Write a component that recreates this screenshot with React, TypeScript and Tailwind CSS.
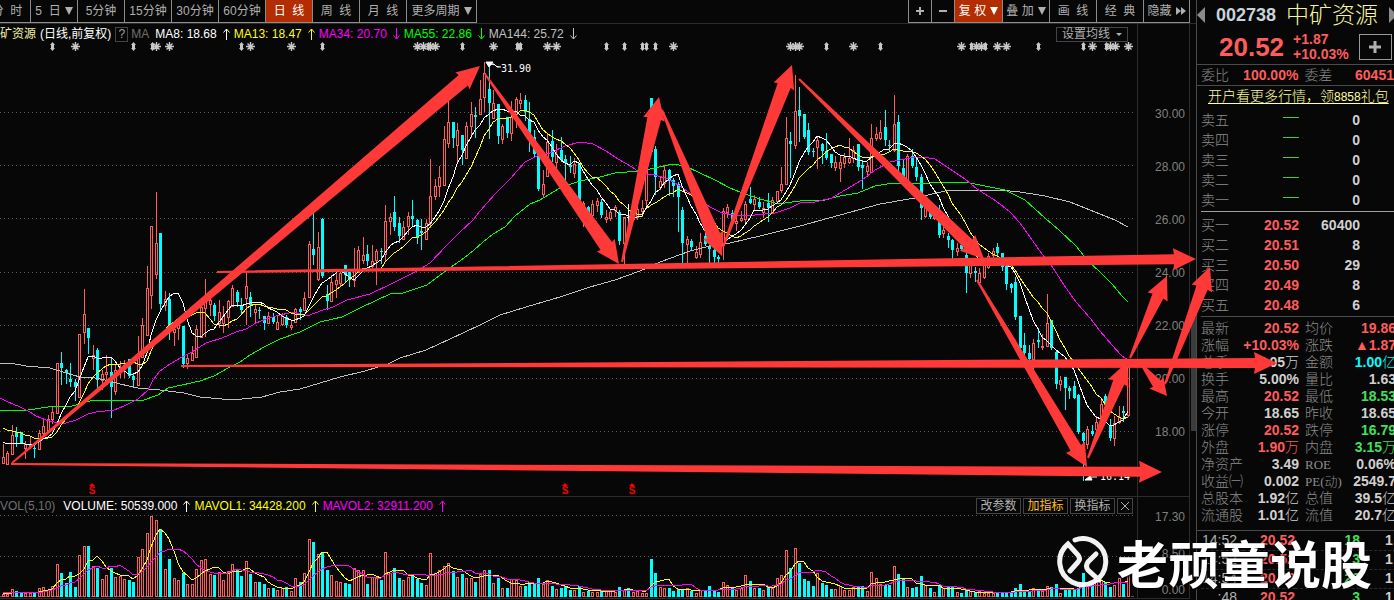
import type { ReactNode } from 'react';

const SANS = "font-['Liberation_Sans','Noto_Sans_CJK_SC',sans-serif]";

const RED = '#ff5c5c';
const CYAN = '#00ffff';

// [kind, high, body top, body bottom, low] on the price pane's vertical scale
type Candle = [string, number, number, number, number];

const CANDLES: Candle[] = [
  ['u', 444, 457, 463, 463], ['u', 451, 453, 464, 464], ['u', 425, 435, 454, 454], ['d', 427, 432, 437, 446],
  ['d', 432, 432, 443, 443], ['u', 441, 444, 448, 458], ['u', 437, 445, 446, 448], ['d', 445, 448, 449, 457],
  ['u', 430, 433, 449, 449], ['u', 419, 426, 433, 436], ['u', 415, 419, 431, 431], ['u', 406, 412, 419, 423],
  ['u', 363, 363, 413, 413], ['d', 352, 363, 368, 384], ['d', 369, 370, 373, 383], ['d', 363, 379, 382, 386],
  ['d', 379, 382, 387, 400], ['u', 334, 334, 397, 397], ['u', 289, 314, 332, 343], ['d', 328, 328, 338, 353],
  ['u', 345, 355, 358, 369], ['d', 348, 350, 380, 387], ['u', 370, 374, 380, 389], ['u', 355, 372, 374, 384],
  ['d', 357, 372, 387, 417], ['u', 365, 370, 391, 394], ['u', 361, 367, 370, 377], ['u', 360, 365, 366, 377],
  ['d', 359, 359, 376, 377], ['d', 373, 376, 380, 385], ['u', 336, 355, 385, 385], ['u', 318, 325, 357, 357],
  ['u', 266, 288, 335, 335], ['u', 226, 226, 295, 308], ['u', 192, 243, 274, 278], ['d', 233, 233, 304, 309],
  ['u', 291, 299, 305, 310], ['d', 293, 299, 332, 339], ['u', 323, 329, 332, 345], ['u', 323, 324, 328, 339],
  ['d', 326, 326, 364, 367], ['u', 355, 358, 363, 368], ['u', 346, 353, 360, 360], ['u', 325, 329, 357, 357],
  ['u', 305, 307, 337, 337], ['u', 279, 302, 308, 336], ['u', 298, 300, 304, 315], ['d', 303, 305, 316, 320],
  ['u', 300, 312, 323, 327], ['u', 306, 316, 323, 332], ['u', 300, 301, 317, 327], ['u', 285, 288, 306, 306],
  ['d', 290, 292, 302, 306], ['d', 298, 305, 310, 314], ['u', 272, 286, 298, 324], ['d', 292, 297, 305, 316],
  ['u', 305, 309, 312, 322], ['d', 307, 310, 311, 318], ['d', 316, 316, 323, 329], ['u', 312, 316, 323, 323],
  ['d', 313, 317, 322, 323], ['u', 315, 322, 329, 329], ['u', 313, 316, 324, 325], ['d', 315, 317, 325, 327],
  ['u', 320, 325, 327, 329], ['u', 308, 309, 322, 322], ['d', 307, 309, 312, 319], ['u', 292, 298, 310, 310],
  ['u', 241, 244, 297, 297], ['d', 212, 249, 255, 264], ['u', 232, 247, 279, 280], ['d', 218, 219, 276, 277],
  ['d', 285, 294, 301, 309], ['u', 275, 282, 301, 301], ['u', 272, 280, 284, 297], ['u', 272, 273, 283, 285],
  ['d', 265, 265, 275, 281], ['d', 272, 272, 280, 286], ['u', 248, 270, 280, 286], ['u', 246, 250, 272, 272],
  ['u', 237, 255, 260, 263], ['d', 245, 254, 261, 265], ['u', 245, 261, 266, 267], ['u', 249, 251, 260, 284],
  ['d', 248, 251, 252, 263], ['u', 205, 221, 254, 260], ['u', 213, 217, 221, 234], ['d', 196, 212, 227, 230],
  ['d', 217, 223, 236, 242], ['u', 221, 227, 239, 239], ['u', 212, 216, 226, 234], ['d', 200, 216, 219, 226],
  ['d', 219, 220, 238, 243], ['d', 219, 231, 233, 249], ['u', 219, 223, 239, 239], ['u', 159, 196, 223, 227],
  ['u', 179, 186, 196, 199], ['u', 166, 177, 186, 196], ['u', 126, 139, 185, 185], ['u', 101, 122, 143, 147],
  ['d', 122, 122, 138, 147], ['u', 123, 130, 145, 161], ['d', 135, 135, 150, 164], ['u', 122, 126, 158, 158],
  ['u', 102, 114, 126, 137], ['d', 107, 115, 117, 137], ['u', 80, 99, 114, 114], ['u', 62, 73, 97, 111],
  ['d', 65, 89, 103, 138], ['u', 90, 103, 118, 118], ['d', 104, 104, 136, 143], ['u', 124, 126, 139, 143],
  ['d', 117, 117, 133, 137], ['u', 101, 117, 133, 140], ['u', 97, 99, 114, 127], ['u', 93, 100, 103, 108],
  ['d', 95, 100, 112, 120], ['d', 102, 119, 137, 151], ['d', 130, 137, 154, 156], ['d', 153, 153, 189, 190],
  ['u', 170, 184, 194, 196], ['u', 133, 142, 176, 176], ['d', 130, 141, 157, 161], ['u', 144, 154, 162, 168],
  ['d', 137, 150, 160, 161], ['d', 155, 159, 163, 183], ['d', 156, 165, 167, 172], ['u', 158, 164, 173, 177],
  ['d', 163, 163, 200, 200], ['u', 201, 203, 215, 226], ['d', 206, 207, 218, 223], ['u', 200, 204, 215, 219],
  ['u', 198, 201, 205, 211], ['d', 199, 202, 215, 217], ['u', 210, 217, 219, 222], ['u', 210, 212, 218, 220],
  ['u', 205, 207, 210, 216], ['d', 210, 212, 241, 244], ['u', 217, 217, 243, 263], ['w', 204, 217, 218, 225],
  ['u', 210, 215, 219, 220], ['u', 205, 209, 217, 219], ['u', 200, 208, 211, 216], ['u', 137, 150, 200, 208],
  ['d', 98, 98, 152, 152], ['d', 146, 149, 177, 194], ['u', 177, 181, 187, 189], ['u', 166, 170, 183, 187],
  ['d', 169, 170, 181, 195], ['d', 178, 180, 186, 196], ['d', 182, 184, 197, 231], ['d', 207, 210, 243, 263],
  ['u', 236, 239, 244, 262], ['d', 239, 241, 247, 250], ['u', 246, 252, 257, 258], ['u', 233, 242, 254, 257],
  ['d', 233, 236, 244, 245], ['d', 245, 246, 249, 263], ['d', 246, 250, 257, 262], ['d', 255, 257, 259, 262],
  ['u', 208, 211, 245, 259], ['u', 204, 207, 212, 217], ['d', 210, 213, 220, 223], ['u', 215, 221, 223, 230],
  ['u', 211, 218, 220, 221], ['u', 201, 204, 219, 222], ['d', 187, 199, 203, 203], ['u', 195, 199, 204, 209],
  ['d', 197, 202, 207, 208], ['u', 202, 208, 212, 217], ['d', 193, 203, 208, 221], ['u', 197, 200, 212, 213],
  ['u', 191, 191, 201, 203], ['u', 167, 184, 190, 192], ['u', 117, 138, 184, 184], ['d', 132, 141, 144, 177],
  ['u', 75, 111, 145, 148], ['d', 87, 110, 116, 141], ['d', 114, 114, 137, 138], ['d', 123, 130, 152, 154],
  ['d', 148, 151, 152, 156], ['u', 137, 140, 147, 168], ['d', 143, 144, 151, 163], ['d', 133, 151, 158, 159],
  ['d', 154, 154, 163, 167], ['u', 156, 162, 167, 170], ['u', 156, 162, 168, 181], ['u', 153, 157, 163, 167],
  ['u', 138, 158, 162, 163], ['u', 146, 150, 158, 162], ['d', 144, 144, 167, 170], ['d', 160, 165, 168, 188],
  ['u', 162, 166, 171, 176], ['u', 124, 138, 172, 172], ['u', 127, 134, 138, 140], ['u', 120, 132, 138, 139],
  ['d', 110, 127, 140, 145], ['d', 140, 145, 146, 150], ['u', 95, 124, 150, 151], ['d', 115, 122, 166, 178],
  ['d', 160, 168, 177, 180], ['u', 154, 156, 182, 182], ['d', 149, 156, 166, 167], ['d', 159, 167, 177, 180],
  ['d', 174, 177, 208, 219], ['u', 200, 207, 216, 217], ['d', 201, 210, 217, 218], ['u', 208, 213, 218, 219],
  ['d', 205, 210, 235, 237], ['u', 225, 230, 233, 237], ['d', 233, 236, 240, 247], ['d', 239, 240, 250, 258],
  ['u', 243, 248, 251, 255], ['d', 240, 245, 249, 250], ['d', 253, 255, 273, 292], ['u', 262, 265, 273, 277],
  ['d', 267, 271, 273, 281], ['u', 268, 273, 282, 284], ['u', 258, 264, 277, 278], ['u', 253, 256, 267, 268],
  ['u', 248, 251, 255, 257], ['d', 243, 247, 253, 255], ['d', 253, 253, 267, 270], ['d', 265, 266, 284, 289],
  ['d', 283, 284, 288, 292], ['d', 277, 282, 317, 319], ['d', 316, 316, 348, 349], ['d', 333, 345, 353, 357],
  ['d', 345, 353, 359, 360], ['u', 339, 343, 359, 371], ['d', 328, 340, 342, 347], ['u', 334, 346, 347, 349],
  ['u', 294, 323, 346, 346], ['d', 320, 320, 348, 349], ['d', 350, 352, 384, 388], ['u', 376, 380, 384, 390],
  ['d', 377, 377, 388, 409], ['d', 386, 388, 391, 398], ['d', 381, 386, 398, 398], ['d', 394, 395, 432, 433],
  ['d', 432, 433, 441, 480], ['u', 426, 429, 444, 448], ['d', 425, 431, 434, 435], ['u', 416, 422, 429, 433],
  ['u', 400, 404, 420, 422], ['d', 394, 396, 405, 420], ['d', 419, 426, 438, 440], ['u', 416, 423, 438, 445],
  ['u', 406, 417, 422, 423], ['d', 406, 411, 413, 421], ['u', 366, 367, 415, 416],
];

const VOLUMES = [
  9, 9, 23, 19, 12, 12, 12, 12, 26, 29, 20, 34, 100, 71, 41, 74, 29, 127, 154, 152, 94, 86, 55, 67, 86, 61, 64, 55,
  50, 44, 121, 145, 193, 244, 230, 203, 85, 113, 58, 52, 71, 40, 40, 85, 112, 115, 68, 65, 76, 50, 79, 100, 81, 64,
  109, 68, 44, 44, 38, 26, 26, 20, 28, 29, 19, 58, 44, 73, 175, 164, 130, 131, 80, 67, 49, 46, 43, 38, 88, 80, 80,
  38, 61, 61, 50, 136, 71, 86, 56, 52, 61, 68, 53, 43, 37, 133, 73, 82, 94, 103, 79, 59, 68, 58, 58, 44, 70, 82, 80,
  43, 56, 28, 26, 53, 51, 32, 32, 44, 41, 56, 40, 52, 32, 25, 26, 34, 20, 22, 34, 16, 17, 16, 16, 22, 20, 22, 16, 29,
  20, 28, 14, 17, 13, 13, 115, 71, 29, 28, 26, 17, 25, 24, 28, 17, 11, 20, 20, 32, 20, 14, 46, 37, 26, 22, 28, 67, 49,
  28, 26, 22, 32, 28, 58, 67, 142, 86, 148, 101, 53, 47, 34, 71, 41, 35, 23, 25, 34, 22, 22, 31, 32, 32, 19, 76, 58,
  40, 35, 35, 94, 68, 53, 31, 26, 29, 62, 37, 26, 16, 35, 28, 29, 29, 16, 11, 20, 17, 15, 17, 13, 12, 12, 16, 14, 14,
  14, 26, 38, 17, 16, 26, 20, 19, 34, 29, 38, 13, 28, 25, 20, 28, 71, 46, 40, 47, 50, 46, 29, 37, 58, 40, 71,
];

const MA34 =
  '0,398 8,402 20,407 30,412 36,416 46,420 58,423 66,423 76,420 88,414 96,412 114,410 124,406 138,399 148,390 153,380 160,371 170,364 182,357 192,352 206,343 222,338 236,332 246,329 256,323 266,319 276,316 293,312 307,316 323,310 333,307 347,300 370,294 393,283 417,271 430,263 447,245 460,232 473,220 480,211 495,194 510,179 525,162 537,156 550,153 565,146 580,142 593,144 606,151 618,159 632,167 642,174 655,175 668,179 680,186 695,197 710,207 722,213 735,215 755,215 775,213 790,208 800,203 815,202 832,198 845,190 862,180 875,170 890,162 900,160 910,158 922,157 935,159 950,169 965,179 977,189 996,201 1010,212 1020,223 1030,237 1042,254 1051,265 1064,285 1076,302 1090,318 1100,331 1112,345 1122,356 1128,360';
const MA55 =
  '0,410 28,410 48,407 72,406 90,401 110,400 144,400 158,395 168,388 182,385 200,381 214,376 228,368 240,362 250,355 264,347 280,339 300,332 320,322 342,317 360,308 390,294 403,293 427,285 447,270 464,258 474,250 483,242 493,234 505,227 515,216 530,204 540,200 560,188 580,181 600,177 615,173 640,171 655,168 672,164 685,166 700,173 715,180 730,188 745,194 760,199 775,203 785,203 800,201 825,200 840,196 858,193 875,186 893,183 920,184 940,182 965,182 980,185 1005,190 1025,200 1045,218 1060,231 1076,246 1088,261 1100,272 1112,284 1122,296 1128,302';
const MA144 =
  '0,363 10,363 26,366 50,368 66,373 80,377 95,378 110,381 120,384 138,388 160,390 184,393 200,397 222,399 242,399 262,397 280,392 300,389 340,377 365,371 388,364 400,358 426,350 450,339 480,325 500,315 526,307 560,297 590,287 615,280 640,271 660,262 690,251 710,246 730,243 760,236 800,226 840,215 880,204 915,198 945,191 970,190 1000,190 1020,192 1045,196 1070,202 1095,212 1115,220 1128,227';

const STARS = [75, 156, 169, 250, 291, 417, 423, 430, 435, 493, 547, 556, 673, 790, 795, 799, 853, 961, 976, 981, 997, 1006, 1092, 1110, 1115, 1128];
const DIAMONDS = [52, 133, 152, 241, 322, 428, 462, 517, 520, 606, 624, 642, 646, 655, 826, 880, 971, 985, 1038, 1083, 1106];

const candleX = (i: number) => Math.floor(3 + i * 4.5);

function average(values: number[], period: number, seed: number) {
  return values.map((_, i) => {
    let sum = 0;
    for (let k = i - period + 1; k <= i; k++) sum += k < 0 ? seed : values[k];
    return sum / period;
  });
}

const toPoints = (values: number[], y: (v: number) => number) =>
  values.map((v, i) => `${candleX(i)},${Math.round(y(v))}`).join(' ');

const CLOSES = CANDLES.map(([kind, , top, bottom]) => (kind === 'u' ? top : bottom));

function Line({ points, color }: { points: string; color: string }) {
  return <polyline points={points} fill="none" stroke={color} strokeWidth="1" />;
}

function Grid({ rows }: { rows: number[] }) {
  return (
    <>
      {rows.map((y) => (
        <line key={y} x1="0" x2="1134" y1={y + 0.5} y2={y + 0.5} stroke="#5a5a5a" strokeDasharray="1 3" />
      ))}
    </>
  );
}

function PriceChart() {
  return (
    <svg viewBox="0 44 1137 452" className="block w-full overflow-visible" role="img" aria-label="日线">
      <g shapeRendering="crispEdges">
        <Grid rows={[112, 165, 218, 272, 325, 378, 431]} />
        {CANDLES.map(([kind, high, top, bottom, low], i) => {
          const x = candleX(i);
          if (kind === 'u') {
            return (
              <g key={i} stroke={RED} fill="none">
                <line x1={x + 0.5} x2={x + 0.5} y1={high} y2={top} />
                <line x1={x + 0.5} x2={x + 0.5} y1={bottom} y2={low + 1} />
                <rect x={x - 0.5} y={top + 0.5} width="2" height={bottom - top} />
              </g>
            );
          }
          const fill = kind === 'w' ? '#ffffff' : CYAN;
          return (
            <g key={i} fill={fill}>
              <rect x={x} y={high} width="1" height={low - high + 1} />
              <rect x={x - 1} y={top} width="3" height={bottom - top} />
            </g>
          );
        })}
        <Line points={MA144} color="#c0c0c0" />
        <Line points={MA55} color="#00ff00" />
        <Line points={MA34} color="#ff00ff" />
        <Line points={toPoints(average(CLOSES, 13, 426), (v) => v)} color="#ffff00" />
        <Line points={toPoints(average(CLOSES, 8, 440), (v) => v)} color="#ffffff" />
      </g>
      <g stroke="#c8c8c8">
        {STARS.map((x) => (
          <path key={x} d={`M${x + 0.5} 42v9M${x - 4} 46.5h9M${x - 2.5} 43.5l6 6M${x + 3.5} 43.5l-6 6`} strokeWidth="1.4" />
        ))}
      </g>
      <g fill="#c8c8c8">
        {DIAMONDS.map((x) => (
          <path key={x} d={`M${x + 0.5} 42l2.5 3h-1v3h1l-2.5 3l-2.5 -3h1v-3h-1z`} />
        ))}
      </g>
      <g className="font-['DejaVu_Sans_Mono',monospace] text-[10px]" fill="#ffffff">
        <path d="M486 62h7l-4 5zM490 64l4 0l3 3h4" stroke="#ffffff" strokeWidth="1" />
        <text x="501" y="72">31.90</text>
        <path d="M1085 480l5 -4l2 4zM1091 477h6" stroke="#ffffff" strokeWidth="1" />
        <text x="1100" y="480">16.14</text>
      </g>
      <g fill="#ff0000" className="font-['Liberation_Sans',sans-serif] text-[10px] font-bold" textAnchor="middle">
        {[92, 565, 632].map((x) => (
          <g key={x}>
            <path d={`M${x - 3} 486h6l-3 -3z`} />
            <text x={x} y="494">S</text>
          </g>
        ))}
      </g>
    </svg>
  );
}

function VolumeChart() {
  const y = (v: number) => 597 - v / 3;
  return (
    <svg viewBox="0 515 1137 83" className="block w-full" role="img" aria-label="VOL">
      <g shapeRendering="crispEdges">
        <Grid rows={[515, 556]} />
        <line x1="0" x2="1134" y1="596.5" y2="596.5" stroke="#5a5a5a" strokeDasharray="8 5" />
        {VOLUMES.map((v, i) => {
          const x = candleX(i);
          const top = Math.round(y(v));
          return CANDLES[i][0] === 'u' ? (
            <rect key={i} x={x - 0.5} y={top + 0.5} width="2" height={596 - top} fill="none" stroke={RED} />
          ) : (
            <rect key={i} x={x - 1} y={top} width="3" height={597 - top} fill={CYAN} />
          );
        })}
        <Line points={toPoints(average(VOLUMES, 5, 13), y)} color="#ffff00" />
        <Line points={toPoints(average(VOLUMES, 10, 15), y)} color="#ff00ff" />
      </g>
    </svg>
  );
}

// [tail x, tail y, tip x, tip y, neck half width]
const ARROWS = [
  [12, 463, 480, 66, 7],
  [485, 74, 619, 264, 7],
  [622, 262, 659, 97, 7],
  [662, 110, 722, 256, 7],
  [723, 247, 792, 65, 7],
  [799, 79, 984, 259, 6],
  [217, 272, 1196, 259, 5],
  [181, 366, 1277, 363, 5],
  [11, 464, 1162, 472, 5],
  [977, 280, 1087, 467, 6],
  [1088, 458, 1127, 362, 6],
  [1130, 358, 1167, 276, 6],
  [1141, 364, 1167, 396, 5],
  [1165, 384, 1210, 267, 6],
];

function arrowPoints([x1, y1, x2, y2, neck]: number[]) {
  const len = Math.hypot(x2 - x1, y2 - y1);
  const ux = (x2 - x1) / len;
  const uy = (y2 - y1) / len;
  const head = len < 50 ? 17 : 23;
  const wing = len < 50 ? 9 : 11;
  const at = (back: number, side: number) =>
    `${(x2 - ux * back - uy * side).toFixed(1)},${(y2 - uy * back + ux * side).toFixed(1)}`;
  return [at(len, 1), at(head - 1, neck), at(head, wing), at(0, 0), at(head, -wing), at(head - 1, -neck), at(len, -1)].join(' ');
}

function TrendArrows() {
  return (
    <svg viewBox="0 0 1394 600" className="pointer-events-none absolute inset-0 h-full w-full" aria-hidden="true">
      {ARROWS.map((a) => (
        <polygon key={a.join()} points={arrowPoints(a)} fill="#ff3838" />
      ))}
    </svg>
  );
}

function Watermark() {
  return (
    <div className="pointer-events-none absolute right-[22px] bottom-2 flex items-center gap-2 text-white">
      <svg viewBox="0 0 52 52" className="h-[52px] w-[52px] opacity-95" fill="none" stroke="#ffffff" strokeWidth="5" strokeLinecap="round" aria-hidden="true">
        <path d="M18 4A23 23 0 1 1 11 8L21 19Q24 23 21 26L13 35" />
        <path d="M39 18L31 26Q28 30 31 34L42 44" />
      </svg>
      <span className="font-['Noto_Sans_CJK_SC',sans-serif] text-[51px] leading-[60px] font-bold [text-shadow:1px_1px_2px_#000]">
        老顽童说股
      </span>
    </div>
  );
}

function ToolButton({ children, width, active }: { children: ReactNode; width: string; active?: boolean }) {
  return (
    <button
      type="button"
      className={`flex h-[23px] shrink-0 items-center justify-center gap-1 border-r border-b border-[#8c8c8c] whitespace-nowrap ${width} ${
        active ? 'bg-[#b42d00] text-white' : 'text-[#b0b0b0]'
      }`}
    >
      {children}
    </button>
  );
}

function Toolbar() {
  return (
    <div className="flex h-6 justify-between border-b border-[#2c2c2c] pr-[6px] text-xs">
      <div className="flex overflow-hidden">
        <ToolButton width="w-[31px]"><span className="-ml-4">分&nbsp; 时</span></ToolButton>
        <ToolButton width="w-[47px]">5 &nbsp;日<Caret /></ToolButton>
        <ToolButton width="w-[47px]">5分钟</ToolButton>
        <ToolButton width="w-[47px]">15分钟</ToolButton>
        <ToolButton width="w-[47px]">30分钟</ToolButton>
        <ToolButton width="w-[47px]">60分钟</ToolButton>
        <ToolButton width="w-[47px]" active>日&nbsp; 线</ToolButton>
        <ToolButton width="w-[47px]">周&nbsp; 线</ToolButton>
        <ToolButton width="w-[47px]">月&nbsp; 线</ToolButton>
        <ToolButton width="w-[70px]">更多周期<Caret /></ToolButton>
      </div>
      <div className="flex border-l border-[#8c8c8c]">
        <ToolButton width="w-[23px]"><Plus /></ToolButton>
        <ToolButton width="w-[23px]">
          <svg viewBox="0 0 8 8" className="h-2 w-2" fill="currentColor" aria-label="缩小"><path d="M0 3h8v2H0z" /></svg>
        </ToolButton>
        <ToolButton width="w-[48px]" active>复 权<Caret /></ToolButton>
        <ToolButton width="w-[47px]">叠 加<Caret /></ToolButton>
        <ToolButton width="w-[47px]">画&nbsp; 线</ToolButton>
        <ToolButton width="w-[47px]">经&nbsp; 典</ToolButton>
        <ToolButton width="w-[46px]">
          隐藏
          <svg viewBox="0 0 10 8" className="h-2 w-[10px]" fill="currentColor" aria-hidden="true"><path d="M0 0l5 4l-5 4zM5 0l5 4l-5 4z" /></svg>
        </ToolButton>
      </div>
    </div>
  );
}

function Caret() {
  return (
    <svg viewBox="0 0 8 8" className="h-2 w-2 shrink-0" fill="currentColor" aria-hidden="true">
      <path d="M0 0h8l-4 8z" />
    </svg>
  );
}

function Plus() {
  return (
    <svg viewBox="0 0 8 8" className="h-2 w-2" fill="currentColor" aria-label="放大">
      <path d="M3 0h2v3h3v2H5v3H3V5H0V3h3z" />
    </svg>
  );
}

function Reading({ label, color, down }: { label: string; color: string; down?: boolean }) {
  return (
    <span className={`flex items-center gap-[6px] ${color}`}>
      {label}
      <svg viewBox="0 0 7 12" className={`h-3 w-[7px] ${down ? 'rotate-180' : ''}`} fill="none" stroke="currentColor" aria-hidden="true">
        <path d="M3.5 12V1M0.500 4.500L3.500 1L6.500 4.500" />
      </svg>
    </span>
  );
}

function PriceHeader() {
  return (
    <div className="flex h-5 items-center text-xs whitespace-nowrap">
      <span className="text-[#f0f0a8]">矿资源</span>
      <span className="ml-1 text-white">(日线,前复权)</span>
      <button type="button" className="ml-1 h-[15px] w-[13px] border border-[#444] leading-3 text-[#a0a0a0]">?</button>
      <span className="ml-[3px] text-[#707070]">MA</span>
      <div className="ml-[6px] flex gap-1">
        <Reading label="MA8: 18.68" color="text-white" />
        <Reading label="MA13: 18.47" color="text-[#ffff00]" />
        <Reading label="MA34: 20.70" color="text-[#ff00ff]" down />
        <Reading label="MA55: 22.86" color="text-[#00ff00]" down />
        <Reading label="MA144: 25.72" color="text-[#c0c0c0]" down />
      </div>
      <button type="button" className="mr-[9px] ml-auto flex h-[15px] w-[72px] items-center justify-center gap-[6px] border border-[#444] text-[#b0b0b0]">
        设置均线
        <svg viewBox="0 0 6 3" className="h-[3px] w-[6px]" fill="currentColor" aria-hidden="true"><path d="M0 0h6l-3 3z" /></svg>
      </button>
    </div>
  );
}

function VolumeHeader() {
  const box = 'h-4 border border-[#444] leading-[14px]';
  return (
    <div className="flex h-[18px] items-center text-xs whitespace-nowrap">
      <span className="text-[#707070]">VOL(5,10)</span>
      <div className="ml-2 flex gap-1">
        <Reading label="VOLUME: 50539.000" color="text-white" />
        <Reading label="MAVOL1: 34428.200" color="text-[#ffff00]" />
        <Reading label="MAVOL2: 32911.200" color="text-[#ff00ff]" />
      </div>
      <div className="mr-1 ml-auto flex gap-[2px] text-[#b0b0b0]">
        <button type="button" className={`w-[45px] ${box}`}>改参数</button>
        <button type="button" className={`w-[45px] text-[#ffc020] ${box}`}>加指标</button>
        <button type="button" className={`w-[45px] ${box}`}>换指标</button>
        <button type="button" aria-label="关闭" className={`flex w-4 items-center justify-center ${box}`}>
          <svg viewBox="0 0 10 10" className="h-[10px] w-[10px]" stroke="currentColor" aria-hidden="true"><path d="M1 1l8 8M9 1l-8 8" /></svg>
        </button>
      </div>
    </div>
  );
}

const TONES: Record<string, string> = {
  red: 'text-[#ff5c5c]',
  green: 'text-[#40e060]',
  cyan: 'text-[#00ffff]',
  white: 'text-[#d0d0d0]',
};

const ASKS = ['卖五', '卖四', '卖三', '卖二', '卖一'];
const BIDS = [
  ['买一', '20.52', '60400'],
  ['买二', '20.51', '8'],
  ['买三', '20.50', '29'],
  ['买四', '20.49', '8'],
  ['买五', '20.48', '6'],
];

const STATS = [
  ['最新', '20.52', 'red', '均价', '19.86', 'red'],
  ['涨幅', '+10.03%', 'red', '涨跌', '▲1.87', 'red'],
  ['总手', '5.05万', 'white', '金额', '1.00亿', 'cyan'],
  ['换手', '5.00%', 'white', '量比', '1.63', 'white'],
  ['最高', '20.52', 'red', '最低', '18.53', 'green'],
  ['今开', '18.65', 'white', '昨收', '18.65', 'white'],
  ['涨停', '20.52', 'red', '跌停', '16.79', 'green'],
  ['外盘', '1.90万', 'red', '内盘', '3.15万', 'green'],
  ['净资产', '3.49', 'white', 'ROE', '0.06%', 'white'],
  ['收益㈠', '0.002', 'white', 'PE(动)', '2549.7', 'white'],
  ['总股本', '1.92亿', 'white', '总值', '39.5亿', 'white'],
  ['流通股', '1.01亿', 'white', '流值', '20.7亿', 'white'],
];

const TRADES = [
  ['14:52', '20.52', '18'],
  ['14:52', '20.52', '3'],
  ['14:54', '20.52', '23'],
  [':48', '20.52', '3'],
];

function StatRow({ row }: { row: string[] }) {
  const [label, value, tone, label2, value2, tone2] = row;
  return (
    <tr className="h-[17px]">
      <th scope="row" className="w-[42px] p-0 text-left font-light text-[#8c8c8c]">{label}</th>
      <td className={`w-[56px] p-0 text-right font-bold ${TONES[tone]}`}>
        <Value text={value} />
      </td>
      <th scope="row" className="w-[48px] p-0 pl-[6px] text-left font-light text-[#8c8c8c]">
        {/[A-Z]/.test(label2) ? <span className="font-['Liberation_Serif','Noto_Sans_CJK_SC',serif] text-[13px]">{label2}</span> : label2}
      </th>
      <td className={`w-[49px] p-0 text-right font-bold ${TONES[tone2]}`}>
        <Value text={value2} />
      </td>
    </tr>
  );
}

// figures are bold, the unit behind them is light
function Value({ text }: { text: string }) {
  const unit = /[万亿]$/.test(text) ? text.slice(-1) : '';
  return (
    <span className="flex justify-end">
      {unit ? text.slice(0, -1) : text}
      {unit && <span className="font-light">{unit}</span>}
    </span>
  );
}

function QuotePanel() {
  return (
    <aside className="w-[198px] shrink-0 overflow-hidden border-l border-[#4a4a4a] text-sm leading-[17px] whitespace-nowrap">
      <div className="h-[65px] border-b border-[#4a4a4a]">
        <div className="flex h-[30px] items-center">
          <button type="button" aria-label="上一只" className="text-[#8c8c8c]">
            <svg viewBox="0 0 8 16" className="h-4 w-2" fill="currentColor"><path d="M8 0v16L0 8z" /></svg>
          </button>
          <span className="ml-[11px] text-lg font-bold text-[#c8d4dc]">002738</span>
          <h1 className="ml-[10px] text-[23px] font-light text-[#f4f4a0]">中矿资源</h1>
          <button type="button" aria-label="下一只" className="ml-[11px] text-[#8c8c8c]">
            <svg viewBox="0 0 8 16" className="h-4 w-2" fill="currentColor"><path d="M0 0v16L8 8z" /></svg>
          </button>
        </div>
        <div className="flex h-[34px] items-center text-[#ff5c5c]">
          <span className="ml-[22px] text-[26px] font-bold">20.52</span>
          <div className="ml-[9px] leading-[15px] font-bold">
            <p>+1.87</p>
            <p>+10.03%</p>
          </div>
          <button type="button" aria-label="加自选" className="ml-[10px] flex h-[26px] w-[33px] shrink-0 items-center justify-center border border-[#9a9a9a] text-[#b0b0b0]">
            <svg viewBox="0 0 12 12" className="h-3 w-3" fill="currentColor" aria-hidden="true"><path d="M4.500 0h3v4.500h4.500v3h-4.500v4.500h-3v-4.500H0v-3h4.500z" /></svg>
          </button>
        </div>
      </div>
      <div className="flex h-[21px] items-center border-b border-[#4a4a4a] pl-1 font-bold text-[#ff5c5c]">
        <span className="w-[42px] font-light text-[#8c8c8c]">委比</span>
        <span className="w-[56px] text-right">100.00%</span>
        <span className="ml-[6px] w-[51px] font-light text-[#8c8c8c]">委差</span>
        <span>60451</span>
      </div>
      <div className="h-[24px] pt-[2px] pl-[11px]">
        <a href="#" className="font-light text-[#ffff9c] underline underline-offset-2">
          开户看更多行情，领<span className="text-xs">8858</span>礼包
        </a>
      </div>
      <table className="ml-1 w-[159px] table-fixed border-collapse">
        <tbody>
          {ASKS.map((label) => (
            <tr key={label} className="h-5">
              <th scope="row" className="w-[42px] p-0 text-left font-light text-[#8c8c8c]">{label}</th>
              <td className="w-[56px] p-0"><div className="mb-[5px] ml-auto h-px w-4 bg-[#30d050]" /></td>
              <td className="p-0 text-right font-bold text-[#d0d0d0]">0</td>
            </tr>
          ))}
        </tbody>
      </table>
      <div className="mt-px ml-1 border-t border-[#a0a0a0] pt-[3px]">
        <table className="w-[159px] table-fixed border-collapse">
          <tbody>
            {BIDS.map(([label, price, size]) => (
              <tr key={label} className="h-5">
                <th scope="row" className="w-[42px] p-0 text-left font-light text-[#8c8c8c]">{label}</th>
                <td className="w-[56px] p-0 text-right font-bold text-[#ff5c5c]">{price}</td>
                <td className="p-0 text-right font-bold text-[#d0d0d0]">{size}</td>
              </tr>
            ))}
          </tbody>
        </table>
      </div>
      <div className="mt-px ml-1 border-t border-[#4a4a4a] pt-[3px]">
        <table className="w-[195px] table-fixed border-collapse">
          <tbody>
            {STATS.map((row) => (
              <StatRow key={row[0]} row={row} />
            ))}
          </tbody>
        </table>
      </div>
      <div className="mt-[6px] border-t border-[#4a4a4a] pl-1">
        <table className="w-[195px] table-fixed border-collapse">
          <tbody>
            {TRADES.map(([time, price, size], i) => (
              <tr key={i} className="h-[19px] border-b border-dashed border-[#2c2c2c] font-bold">
                <td className="w-[42px] p-0 text-right font-normal text-[#b0b0b0]"><span className="mr-[6px]">{time}</span></td>
                <td className="w-[52px] p-0 text-right text-[#ff5c5c]">{price}</td>
                <td className="w-[65px] p-0 text-right text-[#40e060]">{size}</td>
                <td className="w-[36px] p-0 pl-[25px] text-left text-[#d0d0d0]">1</td>
              </tr>
            ))}
          </tbody>
        </table>
      </div>
    </aside>
  );
}

export default function App() {
  return (
    <div className={`relative flex h-screen w-full overflow-hidden bg-[#070707] ${SANS}`}>
      <main className="min-w-0 flex-1">
        <Toolbar />
        <div className="flex">
          <div className="min-w-0 flex-1">
            <section className="flex border-b border-[#2c2c2c]">
              <div className="min-w-0 flex-1">
                <PriceHeader />
                <PriceChart />
              </div>
              <div className="w-[53px] shrink-0 border-x border-[#2c2c2c] pt-[63px] pr-1 text-right text-xs text-[#808080]">
                {['30.00', '28.00', '26.00', '24.00', '22.00', '20.00', '18.00'].map((price) => (
                  <p key={price} className="flex h-[53px] items-center justify-end">{price}</p>
                ))}
              </div>
            </section>
            <section className="flex border-b border-[#2c2c2c]">
              <div className="min-w-0 flex-1">
                <VolumeHeader />
                <VolumeChart />
              </div>
              <div className="flex w-[53px] shrink-0 flex-col justify-between border-x border-[#2c2c2c] pt-3 pr-1 text-right text-xs text-[#808080]">
                <p>17.30</p>
                <p>8.50</p>
                <p>0.00</p>
              </div>
            </section>
          </div>
          <div className="w-[6px] shrink-0 pt-[294px] pl-px">
            <div className="h-[113px] bg-[#3c3c3c]" />
          </div>
        </div>
      </main>
      <QuotePanel />
      <TrendArrows />
      <Watermark />
    </div>
  );
}
